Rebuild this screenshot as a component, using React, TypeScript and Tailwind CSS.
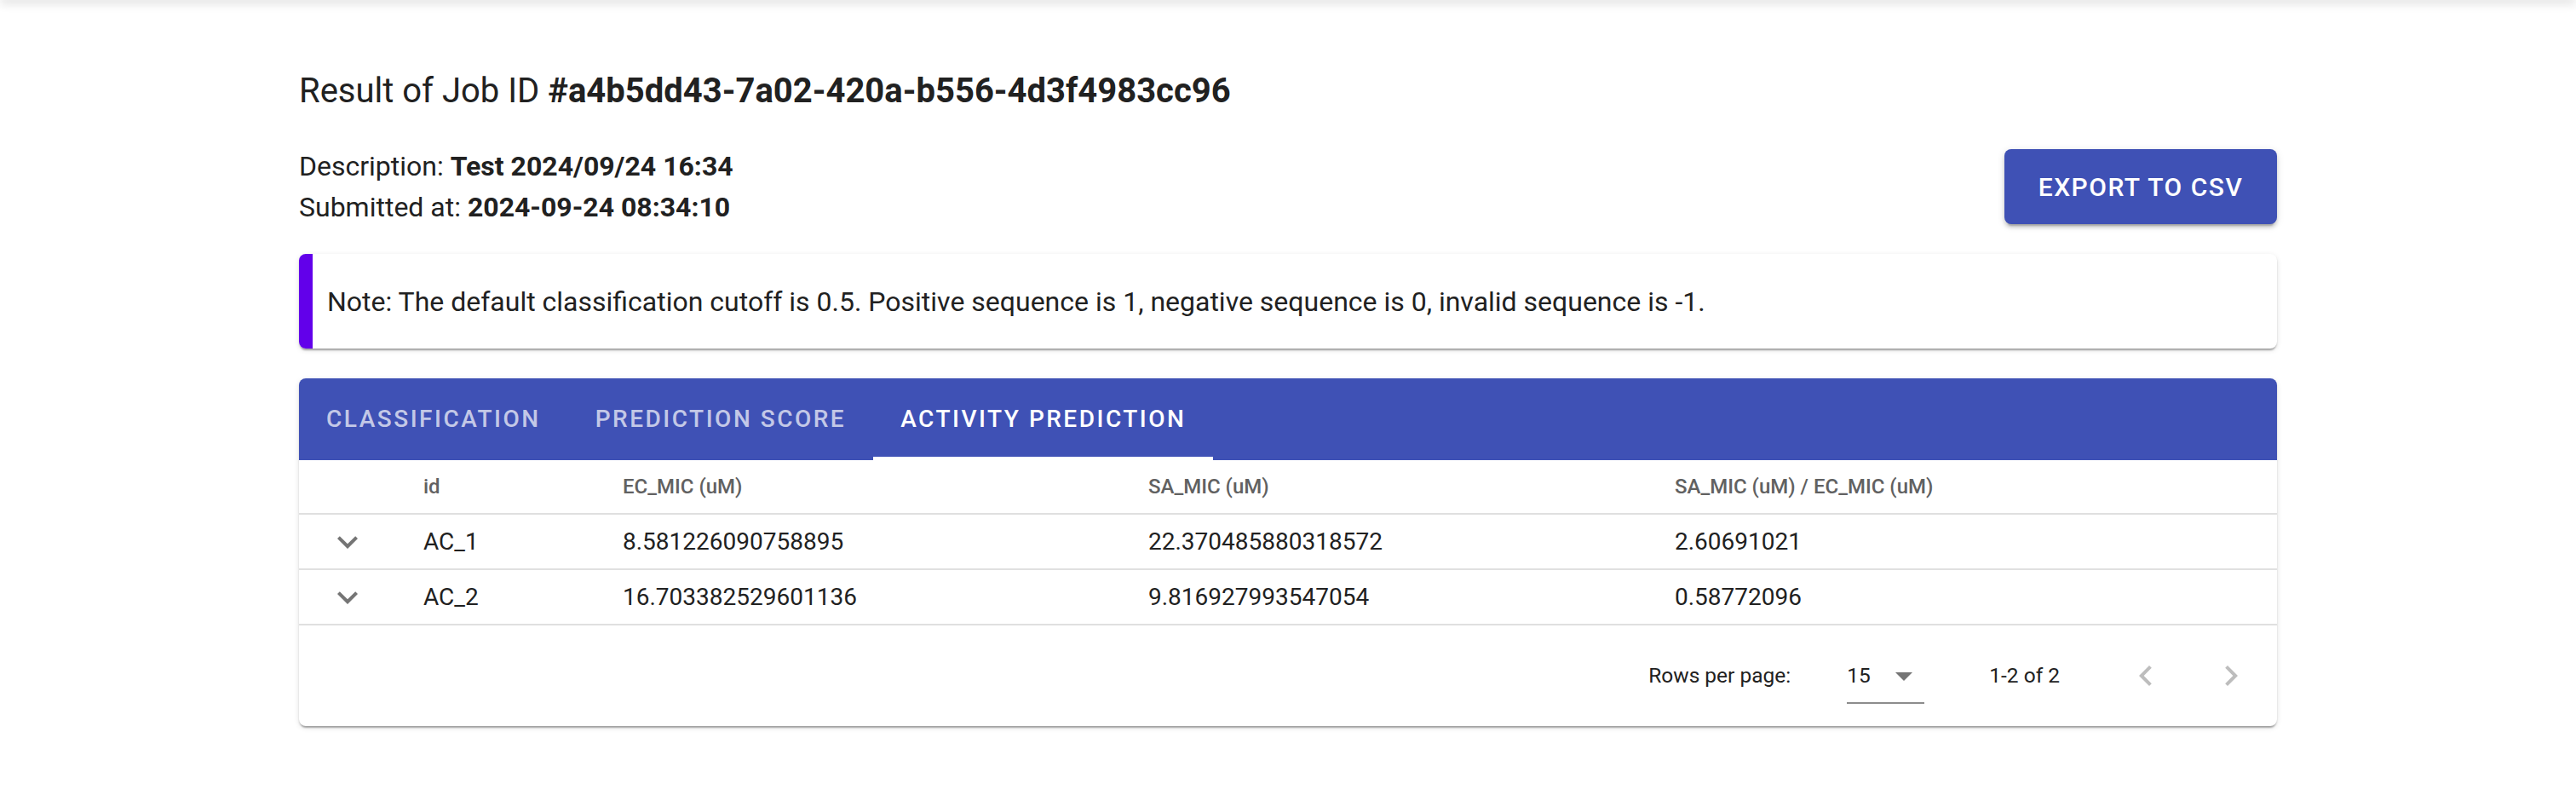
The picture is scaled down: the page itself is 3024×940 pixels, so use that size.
import React from 'react';

const rows = [
  { id: 'AC_1', ec: '8.581226090758895', sa: '22.370485880318572', ratio: '2.60691021' },
  { id: 'AC_2', ec: '16.703382529601136', sa: '9.816927993547054', ratio: '0.58772096' },
];

const tabs = ['Classification', 'Prediction Score', 'Activity Prediction'];

const ChevronDown = ({ className }: { className?: string }) => (
  <svg viewBox="0 0 24 24" className={className} fill="currentColor">
    <path d="M7.41 8.59 12 13.17l4.59-4.58L18 10l-6 6-6-6 1.41-1.41z" />
  </svg>
);

const ChevronLeft = ({ className }: { className?: string }) => (
  <svg viewBox="0 0 24 24" className={className} fill="currentColor">
    <path d="M15.41 16.59 10.83 12l4.58-4.59L14 6l-6 6 6 6 1.41-1.41z" />
  </svg>
);

const ChevronRight = ({ className }: { className?: string }) => (
  <svg viewBox="0 0 24 24" className={className} fill="currentColor">
    <path d="M8.59 16.59 13.17 12 8.59 7.41 10 6l6 6-6 6-1.41-1.41z" />
  </svg>
);

const DropDown = ({ className }: { className?: string }) => (
  <svg viewBox="0 0 24 24" className={className} fill="currentColor">
    <path d="M7 10l5 5 5-5z" />
  </svg>
);

const gridCols = 'grid grid-cols-[114px_234px_617px_618px_1fr]';

export default function App() {
  return (
    <div className="min-h-screen bg-white text-[#212121] font-['Roboto','Liberation_Sans',sans-serif]">
      {/* app bar shadow peeking from above */}
      <div className="h-2 -mt-2 shadow-[0_4px_12px_rgba(0,0,0,0.14)]" />

      <div className="mx-auto w-[2322px]">
        <h1 className="pt-[78px] text-[40px] leading-[58px]">
          Result of Job ID <span className="font-bold">#a4b5dd43-7a02-420a-b556-4d3f4983cc96</span>
        </h1>

        <div className="mt-[35px] flex items-center justify-between">
          <div className="text-[32px] leading-[48px]">
            <div>
              Description: <span className="font-bold">Test 2024/09/24 16:34</span>
            </div>
            <div>
              Submitted at: <span className="font-bold">2024-09-24 08:34:10</span>
            </div>
          </div>
          <button className="h-[88px] w-[320px] rounded-[8px] bg-[#3f51b5] text-[30px] font-medium uppercase tracking-[1.5px] text-white shadow-[0_6px_2px_-4px_rgba(0,0,0,0.2),0_4px_4px_0_rgba(0,0,0,0.14),0_2px_10px_0_rgba(0,0,0,0.12)]">
            Export to CSV
          </button>
        </div>

        {/* note */}
        <div className="mt-[31px] flex h-[111px] overflow-hidden rounded-[8px] bg-white shadow-[0_4px_2px_-2px_rgba(0,0,0,0.2),0_2px_2px_0_rgba(0,0,0,0.14),0_2px_6px_0_rgba(0,0,0,0.12)]">
          <div className="w-[16px] bg-[#6200ea]" />
          <div className="flex items-center pl-[17px] text-[32px] leading-[48px]">
            Note: The default classification cutoff is 0.5. Positive sequence is 1, negative sequence is 0, invalid sequence is -1.
          </div>
        </div>

        {/* results card */}
        <div className="mt-[35px] overflow-hidden rounded-[8px] bg-white shadow-[0_4px_2px_-2px_rgba(0,0,0,0.2),0_2px_2px_0_rgba(0,0,0,0.14),0_2px_6px_0_rgba(0,0,0,0.12)]">
          <div className="flex h-[96px] bg-[#3f51b5]">
            {tabs.map((t, i) => (
              <div
                key={t}
                className={
                  'relative flex items-center px-[32px] text-[28px] font-medium uppercase tracking-[2.5px] ' +
                  (i === 2 ? 'text-white' : 'text-white/70')
                }
              >
                {t}
                {i === 2 && <span className="absolute bottom-0 left-0 right-0 h-[4px] bg-white" />}
              </div>
            ))}
          </div>

          <div className={`${gridCols} h-[64px] items-center border-b-2 border-[#e0e0e0] text-[24px] font-medium text-[#616161]`}>
            <div />
            <div className="pl-[32px]">id</div>
            <div className="pl-[32px]">EC_MIC (uM)</div>
            <div className="pl-[32px]">SA_MIC (uM)</div>
            <div className="pl-[32px]">SA_MIC (uM) / EC_MIC (uM)</div>
          </div>

          {rows.map((r) => (
            <div key={r.id} className={`${gridCols} h-[65px] items-center border-b-2 border-[#e0e0e0] text-[28px]`}>
              <div className="pl-[33px] text-[#757575]">
                <ChevronDown className="h-[48px] w-[48px]" />
              </div>
              <div className="pl-[32px]">{r.id}</div>
              <div className="pl-[32px]">{r.ec}</div>
              <div className="pl-[32px]">{r.sa}</div>
              <div className="pl-[32px]">{r.ratio}</div>
            </div>
          ))}

          <div className="flex h-[118px] items-center justify-end pr-[30px] text-[24.5px]">
            <span>Rows per page:</span>
            <div className="relative ml-[66px] h-[66px] w-[91px] border-b-2 border-[#8c8c8c] pt-[16px] leading-[33px]">
              15
              <DropDown className="absolute right-0 top-[9px] h-[48px] w-[48px] text-[#757575]" />
            </div>
            <span className="ml-[76px]">1-2 of 2</span>
            <ChevronLeft className="ml-[77px] h-[48px] w-[48px] text-[#bdbdbd]" />
            <ChevronRight className="ml-[52px] h-[48px] w-[48px] text-[#bdbdbd]" />
          </div>
        </div>
      </div>
    </div>
  );
}
